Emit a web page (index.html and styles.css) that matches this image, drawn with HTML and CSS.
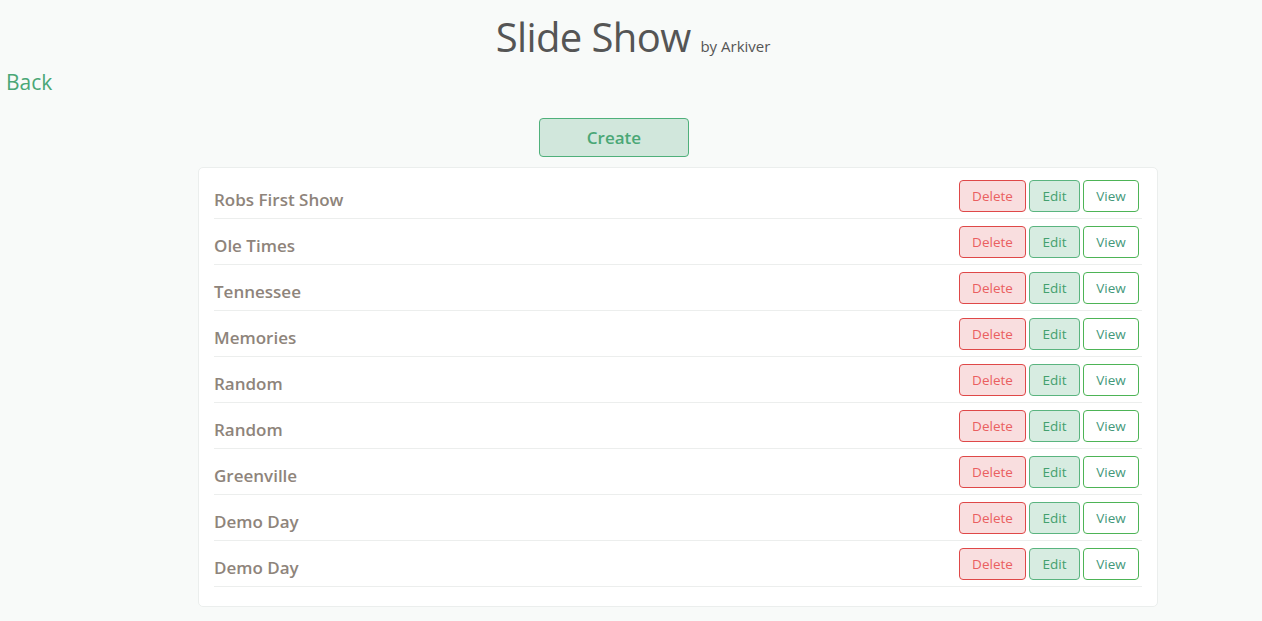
FILE: index.html
```html
<!DOCTYPE html>
<html>
<head>
<meta charset="utf-8">
<link rel="stylesheet" href="styles.css">
</head>
<body>
<header class="header">
  <h1 class="title">Slide Show <small class="by">by Arkiver</small></h1>
</header>
<a class="back" href="#">Back</a>
<div class="create-wrap"><button class="btn-create">Create</button></div>
<main class="card">
  <div class="row"><span class="name">Robs First Show</span><div class="actions"><button class="btn del">Delete</button><button class="btn edit">Edit</button><button class="btn view">View</button></div></div>
  <div class="row"><span class="name">Ole Times</span><div class="actions"><button class="btn del">Delete</button><button class="btn edit">Edit</button><button class="btn view">View</button></div></div>
  <div class="row"><span class="name">Tennessee</span><div class="actions"><button class="btn del">Delete</button><button class="btn edit">Edit</button><button class="btn view">View</button></div></div>
  <div class="row"><span class="name">Memories</span><div class="actions"><button class="btn del">Delete</button><button class="btn edit">Edit</button><button class="btn view">View</button></div></div>
  <div class="row"><span class="name">Random</span><div class="actions"><button class="btn del">Delete</button><button class="btn edit">Edit</button><button class="btn view">View</button></div></div>
  <div class="row"><span class="name">Random</span><div class="actions"><button class="btn del">Delete</button><button class="btn edit">Edit</button><button class="btn view">View</button></div></div>
  <div class="row"><span class="name">Greenville</span><div class="actions"><button class="btn del">Delete</button><button class="btn edit">Edit</button><button class="btn view">View</button></div></div>
  <div class="row"><span class="name">Demo Day</span><div class="actions"><button class="btn del">Delete</button><button class="btn edit">Edit</button><button class="btn view">View</button></div></div>
  <div class="row"><span class="name">Demo Day</span><div class="actions"><button class="btn del">Delete</button><button class="btn edit">Edit</button><button class="btn view">View</button></div></div>
</main>
</body>
</html>
```
FILE: styles.css
```css
* { box-sizing: border-box; }
body {
  margin: 0;
  background: #f8faf9;
  font-family: "Open Sans", "Noto Sans", sans-serif;
  color: #555;
}
.header {
  display: flex;
  justify-content: center;
  padding-top: 12px;
  padding-left: 4px;
  height: 66px;
}
.title {
  margin: 0;
  font-weight: 400;
  font-size: 40px;
  line-height: 50px;
  color: #555;
  letter-spacing: -0.6px;
}
.by {
  font-size: 15px;
  color: #555;
  letter-spacing: 0;
}
.back {
  display: block;
  margin-left: 6px;
  font-size: 21px;
  font-weight: 500;
  line-height: 32px;
  color: #4aa776;
  text-decoration: none;
  width: max-content;
}
.create-wrap {
  display: flex;
  margin-top: 20px;
  padding-left: 539px;
}
.btn-create {
  width: 150px;
  height: 39px;
  background: #d1e7dc;
  border: 1px solid #4fb07b;
  border-radius: 4px;
  color: #4aa776;
  font-family: inherit;
  font-size: 17px;
  font-weight: 600;
}
.card {
  width: 960px;
  margin: 10px 0 0 198px;
  background: #fff;
  border: 1px solid #ebeeed;
  border-radius: 5px;
  padding: 5px 15px 19px;
}
.row {
  display: flex;
  align-items: center;
  justify-content: space-between;
  height: 46px;
  padding-top: 1px;
  border-bottom: 1px solid #eceeed;
}
.name {
  font-size: 17px;
  font-weight: 600;
  color: #8e847b;
  padding-top: 6px;
}
.actions {
  display: flex;
  gap: 3px;
  padding-right: 3px;
}
.btn {
  height: 32px;
  border-radius: 4px;
  font-family: inherit;
  font-size: 13.5px;
  font-weight: 500;
  padding: 0;
}
.del {
  width: 67px;
  background: #f9dedf;
  border: 1px solid #df4848;
  color: #ea5f5f;
}
.edit {
  width: 51px;
  background: #d7ece1;
  border: 1px solid #5ab47f;
  color: #43a06e;
}
.view {
  width: 56px;
  background: #fff;
  border: 1px solid #4db456;
  color: #43987a;
}
```
